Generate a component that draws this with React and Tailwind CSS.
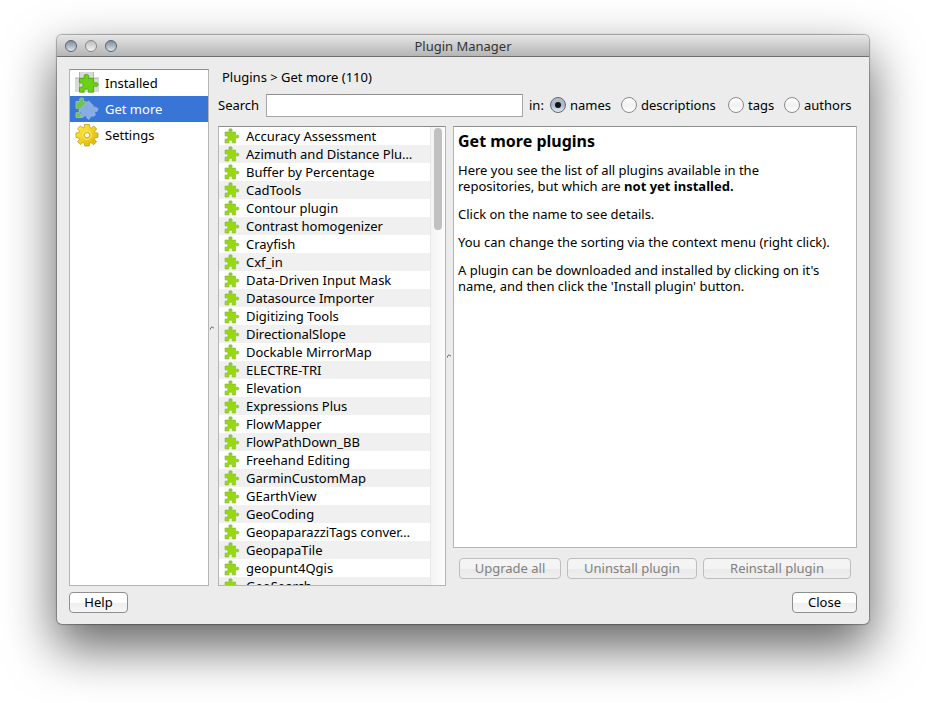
import React from "react";

const PIECE =
  "M1 4H5C5.6 3.300 4.400 2.700 4.800 1.500C5.200 0.400 7.800 0.400 8.200 1.500C8.600 2.700 7.200 3.300 7.800 4H11.600V7.400C12.100 8 12.600 7 13.600 7C15.300 7.200 15.300 9.900 13.600 10.100C12.600 10.200 12.100 9.100 11.600 9.700V15H8.300C7.700 14.200 8.600 13.700 8.200 12.900C7.700 11.900 5.400 11.900 5 12.900C4.600 13.700 5.400 14.200 4.900 15H1V11.200C1.700 10.500 2.200 11.300 3 11C4.300 10.600 4.300 8.300 3 7.900C2.200 7.600 1.700 8.500 1 7.900Z";

const PLUGINS = [
  "Accuracy Assessment",
  "Azimuth and Distance Plu…",
  "Buffer by Percentage",
  "CadTools",
  "Contour plugin",
  "Contrast homogenizer",
  "Crayfish",
  "Cxf_in",
  "Data-Driven Input Mask",
  "Datasource Importer",
  "Digitizing Tools",
  "DirectionalSlope",
  "Dockable MirrorMap",
  "ELECTRE-TRI",
  "Elevation",
  "Expressions Plus",
  "FlowMapper",
  "FlowPathDown_BB",
  "Freehand Editing",
  "GarminCustomMap",
  "GEarthView",
  "GeoCoding",
  "GeopaparazziTags conver…",
  "GeopapaTile",
  "geopunt4Qgis",
  "GeoSearch",
];

function PluginIcon() {
  return (
    <svg className="size-4 shrink-0" viewBox="0 0 16 16" aria-hidden="true">
      <path d={PIECE} fill="url(#leaf)" stroke="#86b552" strokeWidth="0.6" />
    </svg>
  );
}

function InstalledIcon() {
  return (
    <svg className="size-6 shrink-0" viewBox="0 0 24 24" aria-hidden="true">
      <defs>
        <linearGradient id="leaf" x1="0" y1="0" x2="0" y2="1">
          <stop offset="0" stopColor="#8fc63a" />
          <stop offset="0.35" stopColor="#96d80c" />
          <stop offset="1" stopColor="#9ad81a" />
        </linearGradient>
      </defs>
      <path d="M4 1H18.500V7H24V21H0V7H4Z" fill="#d6dbd3" />
      <path d="M0 7H24M4.500 1V21M18.500 1V21" stroke="#9fa79b" strokeWidth="0.8" fill="none" />
      <path
        d="M4.500 7.500H9.300C9.900 6.600 8.600 6 9 4.700C9.700 3.100 13.200 3.100 13.800 4.700C14.300 6 13 6.600 13.600 7.500H18.600V11.800C19.400 12.700 20 11.400 21.400 11.600C23.600 12 23.600 15.200 21.400 15.600C20 15.800 19.400 14.600 18.600 15.400V21.200H13.400C12.700 20.300 14 19.800 13.400 18.800C12.700 17.800 9.900 17.800 9.300 18.800C8.700 19.800 10 20.300 9.300 21.200H4.500V16.500C5.300 15.900 6 16.600 7 16.200C8.500 15.600 8.500 12.500 7 12C6 11.600 5.300 12.500 4.500 11.800Z"
        fill="#6dd113"
        stroke="#4f9a1d"
        strokeWidth="0.8"
      />
    </svg>
  );
}

function GetMoreIcon() {
  return (
    <svg className="size-6 shrink-0" viewBox="0 0 24 24" aria-hidden="true">
      <path
        d="M1 4.500H4.700C5.300 3.700 4.100 3.200 4.600 1.900C5.200 0.600 8.100 0.600 8.700 1.900C9.100 3.200 7.900 3.700 8.500 4.500H11L12 7L4.500 15L7 20.500H1V15.800C2 15.200 2.500 16 3.500 15.600C4.900 15 4.900 12 3.500 11.500C2.500 11.200 2 12 1 11.300Z"
        fill="#72c060"
        stroke="#a3d790"
        strokeWidth="0.7"
      />
      <path
        d="M13.500 3.800L18.500 8.800C18 10.300 19.500 10.600 20.500 10L23.300 11.800L22 14.500C20.500 14 19.500 14.500 19.800 16L20.500 18L18 19.500C17 18.500 15.800 18.800 15.600 20L14 22.500L11.800 21C12.300 19.500 11.500 18.500 10 19L7 20.500L5.500 18.500C7.200 17 7 15.800 5.800 15.300L3.500 13.500Z"
        fill="#86aee2"
        stroke="#a9c6ec"
        strokeWidth="0.5"
        strokeLinejoin="round"
      />
    </svg>
  );
}

function SettingsIcon() {
  return (
    <svg className="size-6 shrink-0" viewBox="0 0 24 24" aria-hidden="true">
      <defs>
        <linearGradient id="gold" x1="0" y1="0" x2="1" y2="1">
          <stop offset="0" stopColor="#ffee4c" />
          <stop offset="1" stopColor="#dfb200" />
        </linearGradient>
      </defs>
      <g fill="url(#gold)" stroke="#c99e0b" strokeWidth="0.8" strokeLinejoin="round">
        <path d="M9.500 1.500H14.500L14.800 4.500L16.300 5.200L18.900 3L21.700 6L19.600 8.500L20.200 9.800L23 10.100V14.500L20.100 14.900L19.400 16.300L21.500 18.900L18.600 21.700L16 19.600L14.600 20.200L14.200 23H9.800L9.400 20.200L7.900 19.500L5.400 21.600L2.500 18.700L4.500 16.200L3.900 14.900L1 14.500V10L4 9.600L4.600 8.200L2.500 5.700L5.400 2.800L8 4.900L9.300 4.400Z" />
        <circle cx="12" cy="12.200" r="2.600" fill="#fff" />
      </g>
      <circle cx="12" cy="12.200" r="4.400" fill="none" stroke="#fff27f" strokeWidth="0.8" />
    </svg>
  );
}

function TrafficLight({ label, muted }) {
  return (
    <button
      type="button"
      aria-label={label}
      className={
        muted
          ? "size-3 rounded-full border border-[#868686] bg-linear-to-b from-[#bdbdbd] to-[#f4f4f4]"
          : "size-3 rounded-full border border-[#59636e] bg-linear-to-b from-[#7e8d9a] to-[#dbe6ee]"
      }
    />
  );
}

function SplitHandle({ className }) {
  return (
    <div className={"flex shrink-0 items-center pl-px " + className}>
      <svg className="h-1 w-1" viewBox="0 0 4 4" aria-hidden="true">
        <path d="M0.500 3.500V2L2 0.800L4 2.200" fill="none" stroke="#666" strokeWidth="1" />
      </svg>
    </div>
  );
}

function Radio({ value, defaultChecked }) {
  return (
    <label className="flex items-center gap-1">
      <input
        type="radio"
        name="scope"
        value={value}
        defaultChecked={defaultChecked}
        className="relative size-4 shrink-0 appearance-none rounded-full border border-[#8b8b8b] bg-linear-to-b from-white via-[#f2f2f2] to-white checked:border-[#5d6876] checked:from-[#b4bfce] checked:via-[#a9b6c7] checked:to-[#e3edf6] checked:after:absolute checked:after:inset-0 checked:after:m-auto checked:after:size-1.5 checked:after:rounded-full checked:after:bg-[#111] checked:after:content-['']"
      />
      {value}
    </label>
  );
}

const BUTTON =
  "h-[21px] rounded border border-[#8f8f8f] bg-linear-to-b from-white from-50% via-[#efefef] via-55% to-[#f6f6f6] pb-px leading-4 disabled:border-[#bdbdbd] disabled:from-[#f4f4f4] disabled:via-[#eaeaea] disabled:to-[#efefef] disabled:text-[#808080]";

const PANEL = "border border-[#b5b5b5] border-t-[#8c8c8c] bg-white";

export default function App() {
  return (
    <div className="flex h-screen bg-white px-[57px] pt-[35px] pb-[79px] font-['Noto_Sans','Open_Sans',sans-serif] text-[13px] leading-4 text-black">
      <main className="flex min-w-0 flex-1 flex-col overflow-hidden rounded-[5px] bg-[#ececec] shadow-[0_22px_50px_2px_rgba(0,0,0,0.6),0_0_1px_1px_rgba(0,0,0,0.3)]">
        <header className="grid h-[22px] shrink-0 grid-cols-3 items-center border-b border-[#6e6e6e] bg-linear-to-b from-[#e6e6e6] to-[#b5b5b5] px-2">
          <div className="flex gap-2">
            <TrafficLight label="Close window" />
            <TrafficLight label="Minimize window" muted />
            <TrafficLight label="Zoom window" />
          </div>
          <h1 className="text-center text-[#333]">Plugin Manager</h1>
        </header>

        <div className="flex min-h-0 flex-1 px-3 pt-3">
          <nav className={"flex w-[140px] shrink-0 flex-col " + PANEL}>
            <a href="#installed" className="flex h-[26px] items-center gap-1.5 pl-[5px]">
              <InstalledIcon />
              Installed
            </a>
            <a
              href="#get-more"
              aria-current="page"
              className="flex h-[26px] items-center gap-1.5 bg-[#3875d7] pl-[5px] text-white"
            >
              <GetMoreIcon />
              Get more
            </a>
            <a href="#settings" className="flex h-[26px] items-center gap-1.5 pl-[5px]">
              <SettingsIcon />
              Settings
            </a>
          </nav>

          <SplitHandle className="w-[9px]" />

          <div className="flex min-w-0 flex-1 flex-col">
            <h2 className="pl-1">Plugins &gt; Get more (110)</h2>

            <form className="mt-2 flex h-6 shrink-0 items-center">
              <label htmlFor="search" className="w-12 shrink-0">
                Search
              </label>
              <input
                id="search"
                type="text"
                className="h-[23px] min-w-0 flex-1 border border-[#a5a5a5] border-t-[#8c8c8c] bg-white px-1 outline-none"
              />
              <fieldset className="ml-1.5 flex shrink-0">
                <span className="w-[21px]">in:</span>
                <div className="grid grid-cols-[71px_107px_56px_73px]">
                  <Radio value="names" defaultChecked />
                  <Radio value="descriptions" />
                  <Radio value="tags" />
                  <Radio value="authors" />
                </div>
              </fieldset>
            </form>

            <div className="mt-[9px] flex min-h-0 flex-1">
              <div className={"flex w-[228px] shrink-0 overflow-hidden " + PANEL}>
                <ul className="min-w-0 flex-1 overflow-hidden">
                  {PLUGINS.map((name) => (
                    <li
                      key={name}
                      className="flex h-[18px] items-center gap-1.5 pl-[5px] whitespace-nowrap even:bg-[#f0f0f0]"
                    >
                      <PluginIcon />
                      {name}
                    </li>
                  ))}
                </ul>
                <div className="w-[15px] shrink-0 border-l border-[#e8e8e8] bg-linear-to-r from-[#f3f3f3] to-[#fdfdfd] px-[3px] pt-px">
                  <div className="h-[102px] rounded-full bg-[#c1c1c1]" />
                </div>
              </div>

              <SplitHandle className="w-[7px]" />

              <section className="flex min-w-0 flex-1 flex-col">
                <article className={"min-h-0 flex-1 px-1 pt-[5px] " + PANEL}>
                  <h3 className="text-base leading-[18px] font-bold">Get more plugins</h3>
                  <p className="mt-3">
                    Here you see the list of all plugins available in the
                    <br />
                    repositories, but which are <b>not yet installed.</b>
                  </p>
                  <p className="mt-3">Click on the name to see details.</p>
                  <p className="mt-3 whitespace-nowrap">
                    You can change the sorting via the context menu (right click).
                  </p>
                  <p className="mt-3">
                    A plugin can be downloaded and installed by clicking on it's
                    <br />
                    name, and then click the 'Install plugin' button.
                  </p>
                </article>
                <div className="mt-2.5 mb-[7px] grid grid-cols-[102fr_130fr_148fr] gap-1.5 px-1.5">
                  <button type="button" disabled className={BUTTON}>
                    Upgrade all
                  </button>
                  <button type="button" disabled className={BUTTON}>
                    Uninstall plugin
                  </button>
                  <button type="button" disabled className={BUTTON}>
                    Reinstall plugin
                  </button>
                </div>
              </section>
            </div>
          </div>
        </div>

        <footer className="flex shrink-0 justify-between px-3 pt-1.5 pb-[11px]">
          <button type="button" className={"w-[59px] " + BUTTON}>
            Help
          </button>
          <button type="button" className={"w-[65px] " + BUTTON}>
            Close
          </button>
        </footer>
      </main>
    </div>
  );
}
